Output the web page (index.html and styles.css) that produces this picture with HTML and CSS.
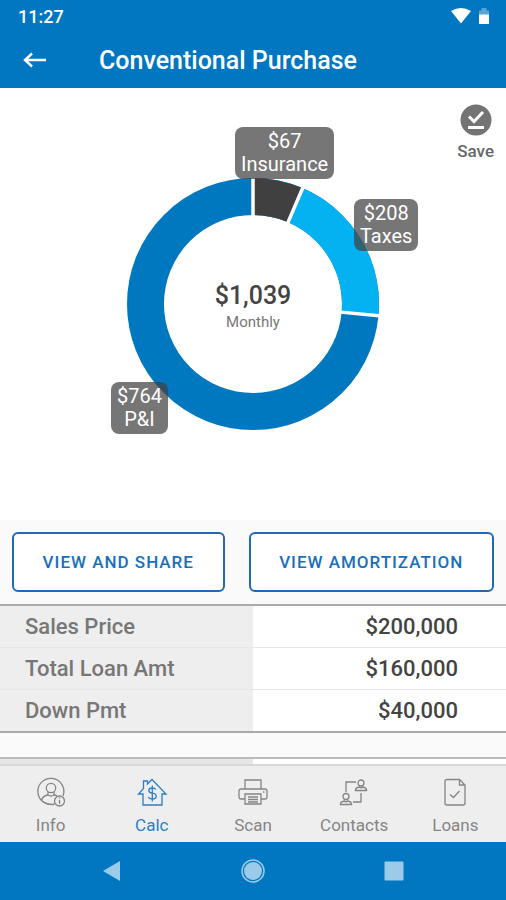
FILE: index.html
```html
<!DOCTYPE html>
<html lang="en">
<head>
<meta charset="utf-8">
<meta name="viewport" content="width=device-width, initial-scale=1">
<title>Conventional Purchase</title>
<link rel="stylesheet" href="styles.css">
</head>
<body>
<header class="header">
  <div class="status">
    <span>11:27</span>
    <span class="status-icons">
      <svg width="20" height="16" viewBox="0 0 20 16" aria-hidden="true"><path d="M0 3Q10-3 20 3L10 15.500Z" fill="#fff"/></svg>
      <svg width="12" height="16" viewBox="0 0 12 16" aria-hidden="true"><path d="M1 7V2.500H3.500V0H8.500V2.500H11V7Z" fill="#fff" opacity=".35"/><path d="M1 6.500H11V16H1Z" fill="#fff"/></svg>
    </span>
  </div>
  <div class="appbar">
    <button class="back" type="button" aria-label="Back">
      <svg width="24" height="16" viewBox="0 0 24 16" fill="none" stroke="#fff" stroke-width="2.400" aria-hidden="true"><path d="M23 8H2M9 1.500L2 8L9 14.500"/></svg>
    </button>
    <h1>Conventional Purchase</h1>
  </div>
</header>

<main class="content">
  <section class="summary">
    <button class="save" type="button">
      <svg width="32" height="32" viewBox="0 0 32 32" aria-hidden="true"><circle cx="16" cy="16" r="15.500" fill="#747474"/><path d="M9 12.500L14 17.500L23 8" fill="none" stroke="#fff" stroke-width="3"/><path d="M8 23.500H24" stroke="#fff" stroke-width="3"/></svg>
      Save
    </button>
    <div class="chart">
      <svg class="donut" viewBox="-126 -126 252 252" aria-hidden="true">
        <g transform="rotate(-90)" fill="none" stroke-width="37">
          <circle r="107.500" pathLength="1039" stroke="#0078c0"/>
          <circle r="107.500" pathLength="1039" stroke="#04b2f1" stroke-dasharray="275 764"/>
          <circle r="107.500" pathLength="1039" stroke="#404040" stroke-dasharray="67 972"/>
        </g>
        <g stroke="#fff" stroke-width="3.500">
          <path d="M0-88V-127"/>
          <path d="M0-88V-127" transform="rotate(23.200)"/>
          <path d="M0-88V-127" transform="rotate(95.300)"/>
        </g>
      </svg>
      <div class="total"><strong>$1,039</strong><span>Monthly</span></div>
      <div class="tag tag-insurance">$67<br>Insurance</div>
      <div class="tag tag-taxes">$208<br>Taxes</div>
      <div class="tag tag-pi">$764<br>P&amp;I</div>
    </div>
  </section>

  <div class="actions">
    <button type="button">VIEW AND SHARE</button>
    <button type="button">VIEW AMORTIZATION</button>
  </div>

  <table class="details">
    <tr><th scope="row">Sales Price</th><td>$200,000</td></tr>
    <tr><th scope="row">Total Loan Amt</th><td>$160,000</td></tr>
    <tr><th scope="row">Down Pmt</th><td>$40,000</td></tr>
  </table>
  <div class="next-table"><span></span></div>
</main>

<nav class="tabs">
  <a href="#info">
    <svg width="32" height="32" viewBox="0 0 32 32" aria-hidden="true"><path d="M20.500 27.500A13 13 0 1 1 28 20M6.500 24.500Q8 19.500 13 19M19 19Q21 19 22 20"/><circle cx="16" cy="12" r="4.700"/><path d="M13 16V19Q16 21 19 19V16M7 25Q12 29 19 28.500"/><circle cx="24.500" cy="25" r="5"/><path d="M24.500 24V28M24.500 21.500V22.700"/></svg>
    Info
  </a>
  <a class="active" href="#calc" aria-current="page">
    <svg width="32" height="32" viewBox="0 0 32 32" aria-hidden="true"><path d="M7 29H26V18H30L16 3.500L11.500 8V5H7.500V12.500L2.500 18H7Z"/><path d="M20 13.500Q19 12 16.200 12Q12.800 12 12.800 14.500Q12.800 16.700 16.200 17.200Q20.200 17.800 20.200 20.200Q20.200 23 16.200 23Q13.200 23 12.200 21M16.300 9.500V25.500"/></svg>
    Calc
  </a>
  <a href="#scan">
    <svg width="32" height="32" viewBox="0 0 32 32" aria-hidden="true"><path d="M8 13V4H24V13M8 23H4Q2 23 2 21V15Q2 13 4 13H28Q30 13 30 15V21Q30 23 28 23H24M8 18H24V28H8ZM11 21H21M11 23.500H21M11 26H21M26 16H27.500"/></svg>
    Scan
  </a>
  <a href="#contacts">
    <svg width="32" height="32" viewBox="0 0 32 32" aria-hidden="true"><path d="M8 16V6H18M15 26H23V17"/><circle cx="23" cy="7" r="3"/><path d="M17.500 14.500V13.500Q18 11.500 21.500 11L23 12L24.500 11Q28 11.500 28.500 13.500V14.500Z"/><circle cx="8" cy="20.500" r="3"/><path d="M2.500 28.500V27.500Q3 25.500 6.500 25L8 26L9.500 25Q13 25.500 13.500 27.500V28.500Z"/></svg>
    Contacts
  </a>
  <a href="#loans">
    <svg width="32" height="32" viewBox="0 0 32 32" aria-hidden="true"><path d="M8 3.500H20.500L26 9V27Q26 29 24 29H8Q6 29 6 27V5.500Q6 3.500 8 3.500ZM20.500 3.500V9H26M11 18.500L14.500 21.500L20.500 15"/></svg>
    Loans
  </a>
</nav>

<footer class="system">
  <button type="button" aria-label="Back"><svg width="24" height="24" viewBox="0 0 24 24" aria-hidden="true"><path d="M3 12L20 2V22Z"/></svg></button>
  <button type="button" aria-label="Home"><svg width="24" height="24" viewBox="0 0 24 24" aria-hidden="true"><circle cx="12" cy="12" r="9"/><circle class="ring" cx="12" cy="12" r="11"/></svg></button>
  <button type="button" aria-label="Recent apps"><svg width="24" height="24" viewBox="0 0 24 24" aria-hidden="true"><rect x="2.500" y="2.500" width="19" height="19" rx="1"/></svg></button>
</footer>
</body>
</html>
```
FILE: styles.css
```css
* {
  box-sizing: border-box;
}

body {
  margin: 0;
  min-height: 100vh;
  display: flex;
  flex-direction: column;
  background: #fafafa;
  color: #444;
  font-family: Roboto, "Liberation Sans", sans-serif;
}

button {
  margin: 0;
  padding: 0;
  border: 0;
  background: none;
  font: inherit;
}

svg {
  display: block;
}

.header {
  background: #0077c0;
  color: #fff;
}

.status {
  display: flex;
  justify-content: space-between;
  align-items: center;
  height: 32px;
  padding: 0 16px 0 18px;
  font-size: 18px;
  font-weight: 500;
}

.status-icons {
  display: flex;
  gap: 7px;
}

.appbar {
  display: flex;
  align-items: center;
  gap: 52px;
  height: 56px;
  padding: 0 23px;
}

h1 {
  margin: 0;
  font-size: 25px;
  font-weight: 500;
}

.content {
  flex: 1;
  display: flex;
  flex-direction: column;
}

.summary {
  position: relative;
  flex: 1;
  padding: 90px 0 88px;
  background: #fff;
}

.save {
  position: absolute;
  top: 16px;
  right: 12px;
  display: flex;
  flex-direction: column;
  align-items: center;
  gap: 5px;
  color: #666;
  font-size: 17px;
  font-weight: 500;
  line-height: 20px;
}

.chart {
  position: relative;
  width: 252px;
  margin: 0 auto;
}

.total {
  position: absolute;
  inset: 0;
  display: flex;
  flex-direction: column;
  align-items: center;
  justify-content: center;
  padding-top: 4px;
  color: #777;
  font-size: 15px;
  line-height: 20px;
}

.total strong {
  color: #444;
  font-size: 25px;
  font-weight: 500;
  line-height: 32px;
}

.tag {
  position: absolute;
  padding: 3px 6px;
  border-radius: 8px;
  background: rgba(65, 65, 65, 0.72);
  color: #fff;
  font-size: 20px;
  line-height: 23px;
  text-align: center;
}

.tag-insurance {
  top: -51px;
  left: 108px;
}

.tag-taxes {
  top: 21px;
  left: 227px;
}

.tag-pi {
  top: 204px;
  left: -16px;
}

.actions {
  display: flex;
  gap: 24px;
  padding: 12px;
}

.actions button {
  flex: 1 1 auto;
  height: 60px;
  border: 2px solid #2068b8;
  border-radius: 6px;
  background: #fff;
  color: #1870bd;
  font-size: 17px;
  font-weight: 500;
  letter-spacing: 1px;
}

.details {
  width: 100%;
  border-collapse: collapse;
  border-top: 2px solid #aaa;
  border-bottom: 2px solid #aaa;
  background: #fff;
  font-size: 22px;
  line-height: 41px;
}

.details th,
.details td {
  width: 50%;
  padding: 0;
  border-bottom: 1px solid #e6e6e6;
  font-weight: 500;
}

.details th {
  padding-left: 25px;
  background: #eee;
  color: #777;
  text-align: left;
}

.details td {
  padding-right: 48px;
  text-align: right;
}

.next-table {
  height: 7px;
  margin-top: 24px;
  border-top: 2px solid #bbb;
  background: #fff;
}

.next-table span {
  display: block;
  width: 50%;
  height: 100%;
  background: #e6e6e6;
}

.tabs {
  display: grid;
  grid-template-columns: repeat(5, 1fr);
  height: 78px;
  padding-top: 10px;
  border-top: 2px solid #d8d8d8;
  background: #eee;
}

.tabs a {
  display: flex;
  flex-direction: column;
  align-items: center;
  gap: 7px;
  color: #858585;
  font-size: 17px;
  line-height: 20px;
  text-decoration: none;
}

.tabs .active {
  color: #2b7fc9;
}

.tabs svg {
  fill: none;
  stroke: currentColor;
  stroke-width: 1.3;
}

.system {
  display: flex;
  justify-content: space-around;
  align-items: center;
  height: 58px;
  padding: 0 42px;
  background: #0077c0;
}

.system svg {
  fill: #9ccbe9;
}

.system .ring {
  fill: none;
  stroke: #9ccbe9;
  stroke-width: 1.5;
}
```
